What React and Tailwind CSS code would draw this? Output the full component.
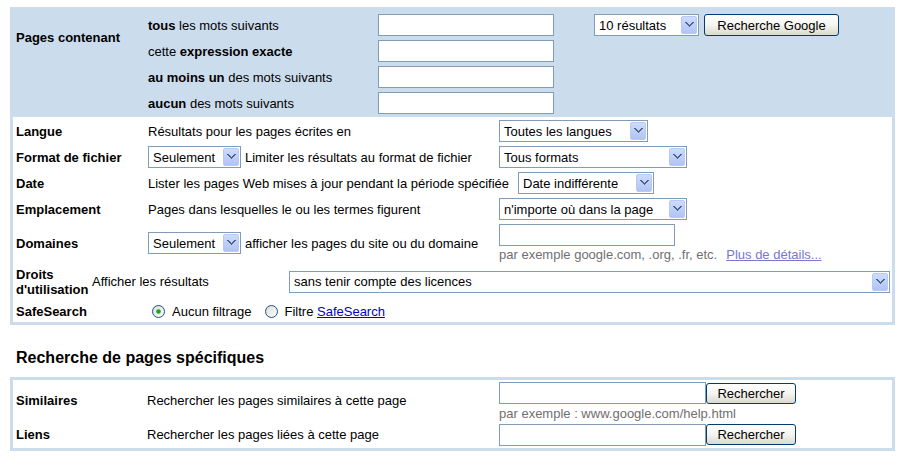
import React from "react";

function Chevron() {
  return (
    <span className="flex h-[18px] w-[16px] mr-[1px] items-center justify-center rounded-[2px] border border-[#b8caf3] bg-linear-to-b from-[#cddcfd] to-[#b0c4f4]">
      <svg width="9" height="6" viewBox="0 0 9 6" shapeRendering="crispEdges">
        <path d="M0 0h2v1h1v1h1v1h1v-1h1v-1h1v-1h2v1h-1v1h-1v1h-1v1h-1v1h-1v-1h-1v-1h-1v-1h-1v-1h-1z" fill="#4d6185" />
      </svg>
    </span>
  );
}

function Select({ className, children }) {
  return (
    <div className={`flex h-[22px] shrink-0 items-center border border-[#7f9db9] bg-white ${className}`}>
      <span className="flex-1 truncate pl-[4px] whitespace-nowrap">{children}</span>
      <Chevron />
    </div>
  );
}

function XPButton({ className, children }) {
  return (
    <button className={`h-[21px] shrink-0 rounded-[3px] border border-[#003c74] bg-linear-to-b from-white via-[#f5f4ef] to-[#dcd9cd] text-[13px] leading-none text-black ${className}`}>
      {children}
    </button>
  );
}

function Input({ className }) {
  return <div className={`h-[22px] shrink-0 border border-[#7f9db9] bg-white ${className}`} />;
}

function Radio({ checked }) {
  return (
    <svg width="13" height="13" viewBox="0 0 13 13" className="shrink-0">
      <defs>
        <linearGradient id={checked ? "rg1" : "rg2"} x1="0" y1="0" x2="1" y2="1">
          <stop offset="0" stopColor="#dcdcd6" />
          <stop offset="1" stopColor="#ffffff" />
        </linearGradient>
      </defs>
      <circle cx="6.5" cy="6.5" r="6" fill={`url(#${checked ? "rg1" : "rg2"})`} stroke="#1c5180" strokeWidth="1" />
      {checked && <circle cx="6.5" cy="6.5" r="2.3" fill="#21a121" />}
    </svg>
  );
}

function Row({ label, children }) {
  return (
    <div className="flex h-[26px] items-center">
      <div className="w-[135px] shrink-0 pl-[3px] font-bold whitespace-nowrap">{label}</div>
      {children}
    </div>
  );
}

export default function App() {
  return (
    <div className="h-[469px] w-[901px] overflow-hidden bg-white pt-[7px] pl-[10px] font-['Liberation_Sans',Arial,sans-serif] text-[13px] leading-[15px] text-black">
      {/* Panel 1 */}
      <div className="w-[885px] border-[3px] border-[#cbdced]">
        {/* Top blue section */}
        <div className="flex bg-[#cbdced] pt-[4px] pb-[3px]">
          <div className="mt-[16px] w-[135px] shrink-0 pl-[3px] font-bold">Pages contenant</div>
          <div className="flex w-[230px] shrink-0 flex-col gap-[4px]">
            <div className="flex h-[22px] items-center"><b>tous</b>&nbsp;les mots suivants</div>
            <div className="flex h-[22px] items-center">cette&nbsp;<b>expression exacte</b></div>
            <div className="flex h-[22px] items-center"><b>au moins un</b>&nbsp;des mots suivants</div>
            <div className="flex h-[22px] items-center"><b>aucun</b>&nbsp;des mots suivants</div>
          </div>
          <div className="flex flex-col gap-[4px]">
            <Input className="w-[176px]" />
            <Input className="w-[176px]" />
            <Input className="w-[176px]" />
            <Input className="w-[176px]" />
          </div>
          <div className="ml-[40px] flex h-[22px] items-center gap-[5px]">
            <Select className="w-[105px]">10 résultats</Select>
            <XPButton className="w-[135px] h-[22px]">Recherche Google</XPButton>
          </div>
        </div>

        {/* Lower white section */}
        <div className="bg-white pt-[1px]">
          <Row label="Langue">
            <div className="w-[351px] shrink-0 whitespace-nowrap">Résultats pour les pages écrites en</div>
            <Select className="w-[149px]">Toutes les langues</Select>
          </Row>
          <Row label="Format de fichier">
            <div className="flex w-[351px] shrink-0 items-center whitespace-nowrap">
              <Select className="w-[93px]">Seulement</Select>
              <span className="ml-[4px]">Limiter les résultats au format de fichier</span>
            </div>
            <Select className="w-[188px]">Tous formats</Select>
          </Row>
          <Row label="Date">
            <div className="w-[370px] shrink-0 whitespace-nowrap">Lister les pages Web mises à jour pendant la période spécifiée</div>
            <Select className="w-[136px]">Date indifférente</Select>
          </Row>
          <Row label="Emplacement">
            <div className="w-[351px] shrink-0 whitespace-nowrap">Pages dans lesquelles le ou les termes figurent</div>
            <Select className="w-[188px]">n'importe où dans la page</Select>
          </Row>

          {/* Domaines */}
          <div className="flex h-[44px]">
            <div className="flex h-[42px] w-[486px] shrink-0 items-center">
              <div className="w-[135px] shrink-0 pl-[3px] font-bold">Domaines</div>
              <Select className="w-[93px]">Seulement</Select>
              <span className="ml-[4px] whitespace-nowrap">afficher les pages du site ou du domaine</span>
            </div>
            <div className="flex flex-col pt-[2px]">
              <Input className="w-[176px]" />
              <div className="mt-[1px] whitespace-nowrap text-[#6f6f6f]">
                par exemple google.com, .org, .fr, etc.
                <a className="ml-[9px] text-[#7777cc] underline" href="#">Plus de détails...</a>
              </div>
            </div>
          </div>

          {/* Droits */}
          <div className="flex h-[31px] items-center">
            <div className="w-[79px] shrink-0 pl-[3px] font-bold leading-[15px]">
              Droits<br />d'utilisation
            </div>
            <div className="w-[197px] shrink-0 whitespace-nowrap">Afficher les résultats</div>
            <Select className="w-[601px]">sans tenir compte des licences</Select>
          </div>

          {/* SafeSearch */}
          <div className="flex h-[25px] items-center pt-[3px]">
            <div className="w-[135px] shrink-0 pl-[3px] font-bold">SafeSearch</div>
            <div className="ml-[4px] flex items-center">
              <Radio checked />
              <span className="ml-[7px]">Aucun filtrage</span>
              <span className="ml-[13px] flex"><Radio /></span>
              <span className="ml-[7px] whitespace-nowrap">
                Filtre <a href="#" className="text-[#0000cc] underline">SafeSearch</a>
              </span>
            </div>
          </div>
        </div>
      </div>

      {/* Heading */}
      <div className="mt-[23px] mb-[9px] h-[20px] pl-[6px] text-[16px] font-bold leading-[20px]">Recherche de pages spécifiques</div>

      {/* Panel 2 */}
      <div className="w-[885px] border-[3px] border-[#cbdced] bg-white">
        <div className="flex h-[41px]">
          <div className="flex h-full w-[486px] shrink-0 items-center">
            <div className="w-[134px] shrink-0 pl-[3px] font-bold">Similaires</div>
            <div className="whitespace-nowrap">Rechercher les pages similaires à cette page</div>
          </div>
          <div className="flex flex-col pt-[2px]">
            <div className="flex items-center">
              <Input className="w-[207px]" />
              <XPButton className="w-[90px]">Rechercher</XPButton>
            </div>
            <div className="mt-[2px] whitespace-nowrap text-[#6f6f6f]">par exemple : www.google.com/help.html</div>
          </div>
        </div>
        <div className="flex h-[27px] items-center">
          <div className="flex w-[486px] shrink-0 items-center">
            <div className="w-[134px] shrink-0 pl-[3px] font-bold">Liens</div>
            <div className="whitespace-nowrap">Rechercher les pages liées à cette page</div>
          </div>
          <div className="flex items-center">
            <Input className="w-[207px]" />
            <XPButton className="w-[90px]">Rechercher</XPButton>
          </div>
        </div>
      </div>
    </div>
  );
}
